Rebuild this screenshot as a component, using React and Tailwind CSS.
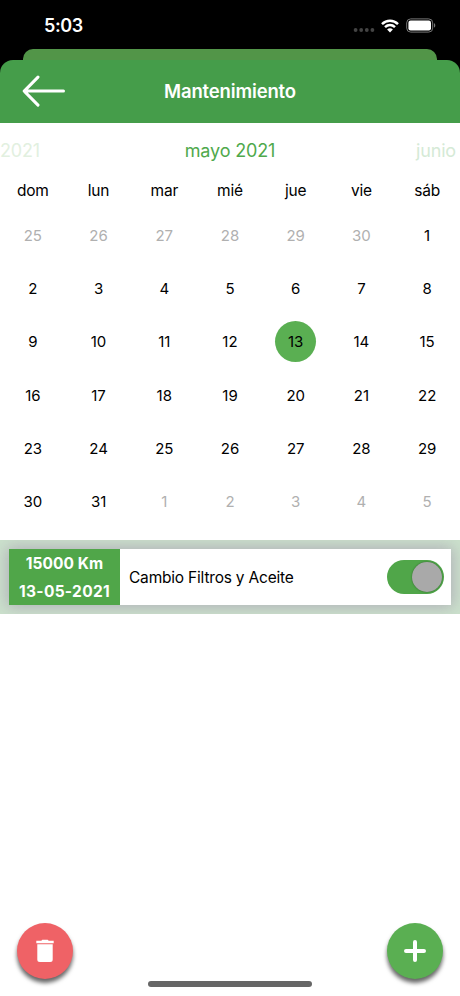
const weekdays = ['dom', 'lun', 'mar', 'mié', 'jue', 'vie', 'sáb'];

const days = [
  ...[25, 26, 27, 28, 29, 30].map((n) => ({ n, outside: true })),
  ...Array.from({ length: 31 }, (_, i) => ({ n: i + 1, outside: false })),
  ...[1, 2, 3, 4, 5].map((n) => ({ n, outside: true })),
];

function StatusBar() {
  return (
    <div className="flex h-[49px] items-start justify-between pl-[44px] pr-[24px] text-white">
      <span className="mt-[14px] text-[18px] leading-6 font-semibold tracking-[-0.4px]">5:03</span>
      <div className="mt-[17px] flex h-[17px] items-center">
        <svg className="mt-[9px] mr-[6px]" width="22" height="4" viewBox="0 0 22 4" fill="#444">
          <circle cx="2.6" cy="2" r="1.9" />
          <circle cx="8.2" cy="2" r="1.9" />
          <circle cx="13.8" cy="2" r="1.9" />
          <circle cx="19.4" cy="2" r="1.9" />
        </svg>
        <svg width="18" height="14" viewBox="0 0 18 14" fill="none" stroke="#fff">
          <path d="M1 5.1C5.6 .6 12.4 .6 17 5.1" strokeWidth="2.5" />
          <path d="M4 8.2C7 5.4 11 5.4 14 8.2" strokeWidth="2.5" />
          <path d="M6.1 10.5C7.8 8.9 10.2 8.9 11.9 10.5L9 13.5Z" fill="#fff" stroke="none" />
        </svg>
        <svg className="ml-[7px]" width="30" height="15" viewBox="0 0 30 15">
          <rect x=".7" y=".9" width="26" height="13.2" rx="4" fill="none" stroke="#777" />
          <rect x="2.4" y="2.6" width="22.6" height="9.8" rx="2.2" fill="#fff" />
          <path d="M28 5.2c1.7.6 1.7 3.8 0 4.4z" fill="#777" />
        </svg>
      </div>
    </div>
  );
}

function Header() {
  return (
    <header className="grid h-[62.5px] grid-cols-[1fr_auto_1fr] items-center rounded-t-[13px] bg-[#459d4a]">
      <svg className="ml-[22px]" width="44" height="32" viewBox="0 0 44 32" fill="none" stroke="#fff" strokeWidth="3" strokeLinecap="round" strokeLinejoin="round">
        <path d="M16 2.1 2.2 16.1 16 30.1M2.2 16.1H41.5" />
      </svg>
      <h1 className="pt-[2px] text-[18.5px] font-semibold tracking-[-0.15px] text-white">Mantenimiento</h1>
    </header>
  );
}

function Calendar() {
  return (
    <section className="h-[417.5px]">
      <div className="grid h-[56px] grid-cols-3 items-center text-[18px] leading-[26px] tracking-[-0.15px]">
        <span className="text-[#e2f0e0]">2021</span>
        <span className="text-center text-[#4fa94c]">mayo 2021</span>
        <span className="pr-[4px] text-right text-[#d5ead6]">junio</span>
      </div>
      <div className="grid h-[30.5px] grid-cols-7 pt-px text-center text-[15.5px] leading-[22px] tracking-[-0.2px] text-black">
        {weekdays.map((d) => (
          <span key={d}>{d}</span>
        ))}
      </div>
      <div className="grid grid-cols-7 text-[15px] leading-[24px]">
        {days.map(({ n, outside }, i) => (
          <div key={i} className="flex h-[53.3px] items-center justify-center">
            <span
              className={
                outside
                  ? 'text-[#b0b0b0]'
                  : n === 13
                    ? '-mt-px flex size-[41px] items-center justify-center rounded-full bg-[#5aaf52] pt-px text-black'
                    : 'text-black'
              }
            >
              {n}
            </span>
          </div>
        ))}
      </div>
    </section>
  );
}

function MaintenanceItem() {
  return (
    <section className="h-[73.5px] overflow-hidden bg-[#cbe1cc] px-[9px] pt-[8.5px]">
      <div className="flex h-[56px] items-center bg-white shadow-[0_0_14px_2px_rgba(165,155,175,0.7)]">
        <div className="flex h-full w-[111px] flex-col bg-[#50a649] pt-px text-center text-[15.5px] leading-[28px] font-bold text-white">
          <span className="tracking-[0.1px]">15000 Km</span>
          <span className="tracking-[0.3px]">13-05-2021</span>
        </div>
        <span className="flex-1 pt-[2px] pl-[9px] text-[15.5px] tracking-[-0.2px] text-black">Cambio Filtros y Aceite</span>
        <div className="mr-[7px] flex h-[34px] w-[57px] items-center justify-end rounded-full bg-[#50a649] pr-[2px]">
          <div className="size-[30px] rounded-full bg-[#a9a9a9] shadow-[0_0_2px_rgba(0,0,0,0.4)]" />
        </div>
      </div>
    </section>
  );
}

export default function App() {
  return (
    <div className="flex h-[996px] w-[460px] flex-col overflow-hidden bg-white font-['Inter','Liberation_Sans',sans-serif]">
      <div className="bg-black">
        <StatusBar />
        <div className="mx-[23px] h-[11px] rounded-t-[10px] bg-[#529548]" />
        <Header />
      </div>
      <Calendar />
      <MaintenanceItem />
      <footer className="mt-auto flex h-[73px] items-start justify-between px-[17px]">
        <button className="flex size-[56px] items-center justify-center rounded-full bg-[#ef6266] shadow-[0_4px_4px_rgba(0,0,0,0.6)]">
          <svg width="18" height="24" viewBox="0 0 18 24" fill="#fff">
            <path d="M.3 1.7h5L6.3.7h5.4l1 1h5v2.5H.3zM1.3 5.2h15.4v15.3q0 2.5-2.5 2.5H3.8q-2.5 0-2.5-2.5z" />
          </svg>
        </button>
        <div className="mt-[58px] h-[6px] w-[164px] rounded-full bg-[#666]" />
        <button className="flex size-[56px] items-center justify-center rounded-full bg-[#5aaf52] shadow-[0_4px_4px_rgba(0,0,0,0.6)]">
          <svg width="24" height="24" viewBox="0 0 24 24" stroke="#fff" strokeWidth="4" strokeLinecap="round">
            <path d="M12 3v18M3 12h18" />
          </svg>
        </button>
      </footer>
    </div>
  );
}
